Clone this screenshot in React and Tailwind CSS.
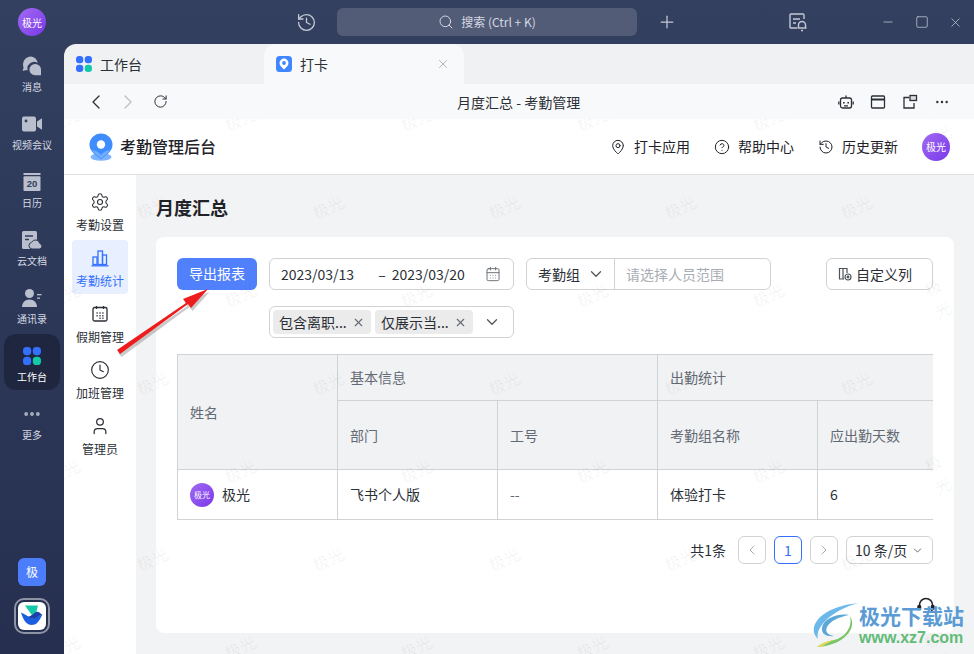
import {
  Settings, Clock, User, MapPin, CircleHelp, History, ChevronLeft, ChevronRight, ChevronDown,
  RotateCw, X, Search, Plus, Minus, Square, Ellipsis, CalendarDays,
} from 'lucide-react';

const FONT = '"Noto Sans CJK SC", "Noto Sans", sans-serif';

function GridIcon({ size = 18 }) {
  return (
    <svg width={size} height={size} viewBox="0 0 18 18">
      <rect x="0" y="0" width="8.2" height="8.2" rx="3.6" fill="#3370ff" />
      <rect x="9.8" y="0" width="8.2" height="8.2" rx="3.6" fill="#3370ff" />
      <rect x="0" y="9.8" width="8.2" height="8.2" rx="3.6" fill="#3370ff" />
      <rect x="9.8" y="9.8" width="8.2" height="8.2" rx="3.6" fill="#14c9a8" />
    </svg>
  );
}

function MessageIcon() {
  return (
    <svg width="20" height="20" viewBox="0 0 20 20" fill="#b9bfcd">
      <path d="M9 0.5a8 8 0 0 0-7.4 11l-1 3.5 3.6-1a8 8 0 0 0 1.6 0.6 6.6 6.6 0 0 1 9.9-7.6A8 8 0 0 0 9 0.5z" />
      <path d="M13 8a5.6 5.6 0 1 0 0 11.2h6v-5.6A5.6 5.6 0 0 0 13 8z" />
    </svg>
  );
}

function VideoIcon() {
  return (
    <svg width="20" height="16" viewBox="0 0 20 16" fill="#b9bfcd">
      <rect x="0" y="0.5" width="14" height="15" rx="2" />
      <path d="M15 5.5l5-3.2v11.4l-5-3.2z" />
      <circle cx="4" cy="5" r="1.4" fill="#323d5c" />
    </svg>
  );
}

function CalendarIcon() {
  return (
    <svg width="18" height="18" viewBox="0 0 18 18">
      <rect x="0.5" y="0" width="17" height="2" fill="#b9bfcd" />
      <rect x="0.5" y="3.2" width="17" height="14.8" rx="1" fill="#b9bfcd" />
      <text x="9" y="14" textAnchor="middle" fontSize="9.5" fontWeight="700" fill="#323d5c" fontFamily="Liberation Sans, sans-serif">20</text>
    </svg>
  );
}

function DocIcon() {
  return (
    <svg width="20" height="18" viewBox="0 0 20 18">
      <rect x="0" y="0" width="15" height="18" rx="1.5" fill="#b9bfcd" />
      <path d="M3 5h8M3 8.5h4" stroke="#323d5c" strokeWidth="1.5" />
      <path d="M10 18a3.4 3.4 0 0 1-.4-6.7 4.4 4.4 0 0 1 8.2 1.2A2.8 2.8 0 0 1 17.4 18z" fill="#b9bfcd" stroke="#2e3858" strokeWidth="1" />
    </svg>
  );
}

function ContactIcon() {
  return (
    <svg width="20" height="18" viewBox="0 0 20 18" fill="#b9bfcd">
      <circle cx="7.5" cy="4.5" r="4.5" />
      <path d="M0 18c0-4.6 3.2-7.6 7.5-7.6S15 13.4 15 18z" />
      <rect x="15" y="5" width="4.5" height="1.3" />
      <rect x="15" y="8.5" width="3" height="1.3" />
    </svg>
  );
}

function PinTile() {
  return (
    <svg width="16" height="16" viewBox="0 0 16 16">
      <rect width="16" height="16" rx="3.5" fill="#3f86ff" />
      <path d="M8 2.6a4.5 4.5 0 0 0-4.5 4.5c0 2.7 2.6 4.6 4.5 6.3 1.9-1.7 4.5-3.6 4.5-6.3A4.5 4.5 0 0 0 8 2.6z" fill="#fff" />
      <circle cx="8" cy="7" r="1.9" fill="#3f86ff" />
    </svg>
  );
}

function BrandPin() {
  return (
    <svg width="24" height="28" viewBox="0 0 24 28">
      <ellipse cx="12" cy="24" rx="10.5" ry="3.8" fill="#7db4ff" />
      <path d="M12 0.5A11.5 11.5 0 0 0 0.5 12c0 6.2 6.5 10.4 11.5 14.2 5-3.8 11.5-8 11.5-14.2A11.5 11.5 0 0 0 12 0.5z" fill="#3f8cff" />
      <path d="M3 17c3 0.5 7 2 9 5 2-3 6-4.5 9-5-2.2 3.6-6 6-9 8.5-3-2.5-6.8-4.9-9-8.5z" fill="#6fadff" />
      <circle cx="12" cy="11.5" r="4.2" fill="#fff" />
    </svg>
  );
}

function LarkLogo() {
  return (
    <svg width="24" height="24" viewBox="0 0 24 24">
      <path d="M5 1.5h13l-2.5 9.5-3 1z" fill="#14c9a8" />
      <path d="M1 8.5c3.5 1.5 7 4 10.5 5.5 3 1 7-2.5 11-3.5-3 5.5-5 10.5-11 10.5-4.5 0-8-4-10.5-12.5z" fill="#1a5fe0" />
      <path d="M8 13c2 0.8 4 2 6 1.5 2.5-0.7 5-2.8 8.5-4-1.5 0.2-3-4-6.5-2.500-2 1-3 3-8 5z" fill="#1f3fa8" />
    </svg>
  );
}

function BarsIcon() {
  return (
    <svg width="18" height="18" viewBox="0 0 18 18" fill="none" stroke="#3370ff" strokeWidth="1.3">
      <rect x="2" y="8" width="4" height="7.5" />
      <rect x="7" y="2" width="4.5" height="13.5" />
      <rect x="11.5" y="6" width="4" height="9.5" />
      <path d="M0.5 16.8h17" />
    </svg>
  );
}

function HolidayIcon() {
  return (
    <svg width="18" height="18" viewBox="0 0 18 18" fill="none" stroke="#2b2f36" strokeWidth="1.3">
      <rect x="2" y="2.5" width="14" height="13.5" rx="1.5" />
      <path d="M5.5 1v3M12.5 1v3" />
      <path d="M5.5 8h1.2M8.4 8h1.2M11.3 8h1.2M5.5 10.8h1.2M8.4 10.8h1.2M11.3 10.8h1.2M8.4 13.3h1.2M11.3 13.3h1.2" strokeWidth="1.5" />
    </svg>
  );
}

function RobotIcon() {
  return (
    <svg width="16" height="16" viewBox="0 0 16 16" fill="none" stroke="#2b2f36" strokeWidth="1.3">
      <rect x="2.5" y="4" width="11" height="10" rx="2" />
      <path d="M8 1.5V4M0.8 7.5v3M15.2 7.5v3" />
      <path d="M5.8 8v1.5M10.2 8v1.5" strokeWidth="1.6" />
      <path d="M6 11.8h4" />
    </svg>
  );
}

function WindowIcon() {
  return (
    <svg width="16" height="16" viewBox="0 0 16 16" fill="none" stroke="#2b2f36" strokeWidth="1.3">
      <rect x="1.5" y="2" width="13" height="12" rx="1" />
      <path d="M1.5 5.5h13" strokeWidth="2" />
    </svg>
  );
}

function PopoutIcon() {
  return (
    <svg width="16" height="16" viewBox="0 0 16 16" fill="none" stroke="#2b2f36" strokeWidth="1.3">
      <path d="M7 3.5H2V14h10V9" />
      <rect x="8" y="1.5" width="6.5" height="5" fill="#2b2f36" fillOpacity="0.15" />
    </svg>
  );
}

function ColumnsIcon() {
  return (
    <svg width="14" height="14" viewBox="0 0 14 14" fill="none" stroke="#4e5358" strokeWidth="1.2">
      <path d="M6 12H1.5V1.5H9V6M5 1.5V12" />
      <circle cx="10" cy="10" r="3" />
      <circle cx="10" cy="10" r="0.8" fill="#4e5358" />
    </svg>
  );
}

function NoticeIcon() {
  return (
    <svg width="20" height="20" viewBox="0 0 20 20" fill="none" stroke="#c3c8d4" strokeWidth="1.4">
      <path d="M9 16H3a1 1 0 0 1-1-1V3a1 1 0 0 1 1-1h12a1 1 0 0 1 1 1v4" />
      <path d="M5 7h7M5 11h3" />
      <path d="M10.5 16v-3a3.5 3.5 0 0 1 7 0v3zM9.5 16h9M13 18.5h2" />
    </svg>
  );
}

function Avatar({ size, text }) {
  return (
    <div className={`${size} flex shrink-0 items-center justify-center rounded-full bg-gradient-to-br from-[#a269f2] to-[#7a35e8] text-white`}>
      {text}
    </div>
  );
}

const RAIL = [
  { label: '消息', icon: <MessageIcon /> },
  { label: '视频会议', icon: <VideoIcon /> },
  { label: '日历', icon: <CalendarIcon /> },
  { label: '云文档', icon: <DocIcon /> },
  { label: '通讯录', icon: <ContactIcon /> },
  { label: '工作台', icon: <GridIcon />, active: true },
  { label: '更多', icon: <Ellipsis size={20} color="#a9afbf" strokeWidth={2.6} /> },
];

const SIDE = [
  { label: '考勤设置', icon: <Settings size={20} strokeWidth={1.3} color="#2b2f36" /> },
  { label: '考勤统计', icon: <BarsIcon />, active: true },
  { label: '假期管理', icon: <HolidayIcon /> },
  { label: '加班管理', icon: <Clock size={20} strokeWidth={1.4} color="#2b2f36" /> },
  { label: '管理员', icon: <User size={20} strokeWidth={1.5} color="#2b2f36" /> },
];

const LINKS = [
  { label: '打卡应用', icon: <MapPin size={16} strokeWidth={1.5} /> },
  { label: '帮助中心', icon: <CircleHelp size={16} strokeWidth={1.5} /> },
  { label: '历史更新', icon: <History size={16} strokeWidth={1.5} /> },
];

// staggered 极光 marks across the page area
const MARKS = [];
for (let row = 0; row < 7; row++) {
  for (let col = 0; col < 6; col++) {
    MARKS.push({ x: (row % 2 === 0 ? 0 : 88) + col * 176, y: row * 88 });
  }
}

function Tag({ text }) {
  return (
    <div className="flex h-6 w-[98px] items-center justify-between rounded bg-[#ebebeb] pl-[6px] pr-[6px] text-[14px] text-[#2b2f36]">
      <span>{text}</span>
      <X size={13} color="#646a73" strokeWidth={2} />
    </div>
  );
}

function PageButton({ children, active }) {
  return (
    <div className={`flex h-7 w-7 items-center justify-center rounded-md border bg-white text-[14px] ${active ? 'border-[#3370ff] text-[#3370ff]' : 'border-[#d0d3d6] text-[#a9adb3]'}`}>
      {children}
    </div>
  );
}

export default function App() {
  const th = 'border-r border-b border-[#d0d3d6] bg-[#f1f2f4] px-3 text-left text-[14px] font-normal text-[#646a73]';
  const td = 'border-r border-b border-[#d0d3d6] bg-white px-3 text-[14px] text-[#2b2f36]';

  return (
    <div className="relative flex h-[654px] w-[974px] overflow-hidden bg-gradient-to-b from-[#33405f] to-[#262f50]" style={{ fontFamily: FONT }}>
      {/* Left rail */}
      <div className="flex w-[64px] shrink-0 flex-col items-center">
        <div className="mt-2 flex h-7 items-center">
          <Avatar size="h-7 w-7 text-[10px]" text="极光" />
        </div>
        <div className="mt-2 flex flex-col items-center gap-[2px]">
          {RAIL.map(item => (
            <div
              key={item.label}
              className={`flex h-14 w-14 flex-col items-center justify-center gap-1 rounded-xl pt-[6px] ${item.active ? 'bg-[#1f2740]' : ''}`}
            >
              <div className="flex h-5 items-center justify-center">{item.icon}</div>
              <div className={`text-[10px] leading-[14px] ${item.active ? 'text-white' : 'text-[#d5d9e3]'}`}>{item.label}</div>
            </div>
          ))}
        </div>
        <div className="mt-auto mb-5 flex flex-col items-center gap-3">
          <div className="flex h-7 w-7 items-center justify-center rounded-md bg-[#4c7efb] text-[12px] text-white">极</div>
          <div className="flex h-9 w-9 items-center justify-center rounded-[10px] border-2 border-[#8e94a5]">
            <div className="flex h-7 w-7 items-center justify-center rounded-md bg-white">
              <LarkLogo />
            </div>
          </div>
        </div>
      </div>

      <div className="flex min-w-0 flex-1 flex-col">
        {/* Title bar */}
        <div className="flex h-11 shrink-0 items-center text-[#c3c8d4]">
          <History size={21} strokeWidth={1.5} className="ml-[232px]" />
          <div className="ml-[20px] flex h-7 w-[300px] items-center justify-center gap-[7px] rounded-md bg-[#525c76] text-[12px] text-[#d5d9e3]">
            <Search size={16} strokeWidth={1.5} />
            <span>搜索 (Ctrl + K)</span>
          </div>
          <Plus size={20} strokeWidth={1.5} className="ml-[20px]" />
          <div className="ml-[111px]"><NoticeIcon /></div>
          <Minus size={14} strokeWidth={1.3} className="ml-[73px]" />
          <Square size={14} strokeWidth={1.3} className="ml-[20px]" />
          <X size={15} strokeWidth={1.2} className="ml-[19px]" />
        </div>

        {/* Window */}
        <div className="relative flex min-h-0 flex-1 flex-col overflow-hidden rounded-tl-xl bg-[#f0f1f3]">
          {/* Tabs */}
          <div className="flex h-10 shrink-0">
            <div className="flex w-[200px] items-center gap-[8px] pl-3 text-[14px] text-[#2b2f36]">
              <GridIcon size={16} />
              <span>工作台</span>
            </div>
            <div className="flex w-[200px] items-center gap-[8px] rounded-t-xl bg-[#f8f9fb] pl-3 pr-[14px] text-[14px] text-[#2b2f36]">
              <PinTile />
              <span>打卡</span>
              <X size={14} strokeWidth={1.2} color="#8f959e" className="ml-auto" />
            </div>
          </div>

          {/* Browser nav */}
          <div className="flex h-[35px] shrink-0 items-center bg-[#f8f9fb] pl-[20px] pr-[24px] text-[#2b2f36]">
            <ChevronLeft size={24} strokeWidth={1.3} />
            <ChevronRight size={24} strokeWidth={1.3} color="#bbbfc4" className="ml-[8px]" />
            <RotateCw size={15} strokeWidth={1.6} className="ml-[13px]" />
            <div className="ml-[289px] text-[14px] leading-none">月度汇总 - 考勤管理</div>
            <div className="ml-auto flex items-center gap-[16px]">
              <RobotIcon />
              <WindowIcon />
              <PopoutIcon />
              <Ellipsis size={16} strokeWidth={1.6} />
            </div>
          </div>

          <div className="relative flex min-h-0 flex-1 flex-col">
            {/* App header */}
            <div className="flex h-14 shrink-0 items-center border-b border-[#dee0e3] bg-white pl-[25px] pr-6">
              <BrandPin />
              <div className="ml-[7px] pb-[2px] text-[16px] font-medium text-[#1f2329]">考勤管理后台</div>
              <div className="ml-auto flex items-center gap-[24px] text-[#1f2329]">
                {LINKS.map(link => (
                  <div key={link.label} className="flex items-center gap-2">
                    {link.icon}
                    <span className="text-[14px]">{link.label}</span>
                  </div>
                ))}
                <Avatar size="h-7 w-7 text-[10px]" text="极光" />
              </div>
            </div>

            <div className="flex min-h-0 flex-1">
              {/* Side nav */}
              <div className="flex w-[72px] shrink-0 flex-col items-center gap-[2px] bg-white pt-[9px]">
                {SIDE.map(item => (
                  <div
                    key={item.label}
                    className={`flex h-[54px] w-14 flex-col items-center justify-center gap-[5px] rounded pt-[2px] ${item.active ? 'bg-[#e8effe] text-[#3370ff]' : 'text-[#2b2f36]'}`}
                  >
                    <div className="flex h-5 items-center">{item.icon}</div>
                    <div className="text-[12px] leading-[16px]">{item.label}</div>
                  </div>
                ))}
              </div>

              {/* Main */}
              <div className="min-w-0 flex-1 bg-[#f2f3f5] px-5 pt-[19px]">
                <div className="text-[18px] font-bold leading-[26px] text-[#1f2329]">月度汇总</div>
                <div className="relative mt-[17px] h-[396px] rounded-lg bg-white px-[21px] pt-[21px]">
                  {/* Filters */}
                  <div className="flex items-start">
                    <div className="flex h-8 w-20 items-center justify-center rounded-md bg-[#5080fb] pb-[2px] text-[14px] text-white">导出报表</div>
                    <div className="ml-3 flex flex-col gap-4">
                      <div className="flex h-8 w-[245px] items-center rounded-md border border-[#d0d3d6] pl-[11px] pr-[12px] text-[14px] text-[#2b2f36]">
                        <span>2023/03/13</span>
                        <span className="ml-[24px]">–</span>
                        <span className="ml-[6px]">2023/03/20</span>
                        <CalendarDays size={16} strokeWidth={1.4} color="#646a73" className="ml-auto" />
                      </div>
                      <div className="flex h-8 w-[245px] items-center gap-[4px] rounded-md border border-[#d0d3d6] pl-[3px] pr-[12px]">
                        <Tag text="包含离职..." />
                        <Tag text="仅展示当..." />
                        <ChevronDown size={18} strokeWidth={1.6} color="#4e5358" className="ml-auto" />
                      </div>
                    </div>
                    <div className="ml-3 flex h-8 w-[245px] items-center rounded-md border border-[#d0d3d6] text-[14px]">
                      <div className="flex h-full w-[88px] items-center gap-[7px] border-r border-[#d0d3d6] pl-[11px] text-[#2b2f36]">
                        <span>考勤组</span>
                        <ChevronDown size={18} strokeWidth={1.6} color="#4e5358" />
                      </div>
                      <span className="pl-[11px] text-[#a9adb3]">请选择人员范围</span>
                    </div>
                    <div className="ml-auto flex h-8 w-[107px] items-center gap-[4px] rounded-md border border-[#d0d3d6] pl-[11px] text-[14px] text-[#2b2f36]">
                      <ColumnsIcon />
                      <span>自定义列</span>
                    </div>
                  </div>

                  {/* Table */}
                  <div className="mt-4 w-[756px] overflow-hidden border-l border-t border-[#d0d3d6]">
                    <table className="w-[960px] table-fixed border-separate border-spacing-0">
                      <thead>
                        <tr className="h-[46px]">
                          <th rowSpan={2} className={`${th} w-[160px]`}>姓名</th>
                          <th colSpan={2} className={th}>基本信息</th>
                          <th colSpan={3} className={th}>出勤统计</th>
                        </tr>
                        <tr className="h-[69px]">
                          <th className={th}>部门</th>
                          <th className={th}>工号</th>
                          <th className={th}>考勤组名称</th>
                          <th className={th}>应出勤天数</th>
                          <th className={th}></th>
                        </tr>
                      </thead>
                      <tbody>
                        <tr className="h-[50px]">
                          <td className={td}>
                            <div className="flex items-center gap-2">
                              <Avatar size="h-6 w-6 text-[8px]" text="极光" />
                              <span>极光</span>
                            </div>
                          </td>
                          <td className={td}>飞书个人版</td>
                          <td className={`${td} text-[#646a73]`}>--</td>
                          <td className={td}>体验打卡</td>
                          <td className={td}>6</td>
                          <td className={td}></td>
                        </tr>
                      </tbody>
                    </table>
                  </div>

                  {/* Pagination */}
                  <div className="mt-4 flex items-center justify-end gap-2 text-[14px] text-[#2b2f36]">
                    <span className="mr-1">共1条</span>
                    <PageButton><ChevronLeft size={16} strokeWidth={1.5} /></PageButton>
                    <PageButton active>1</PageButton>
                    <PageButton><ChevronRight size={16} strokeWidth={1.5} /></PageButton>
                    <div className="flex h-7 w-[87px] items-center justify-between rounded-md border border-[#d0d3d6] pl-2 pr-2">
                      <span>10 条/页</span>
                      <ChevronDown size={13} strokeWidth={1.8} color="#646a73" />
                    </div>
                  </div>

                  {/* Support button */}
                  <div className="absolute bottom-[6px] right-[7px] flex h-[42px] w-[42px] items-center justify-center rounded-full bg-white">
                    <svg width="20" height="20" viewBox="0 0 20 20" fill="none" stroke="#1f2329" strokeWidth="1.5">
                      <path d="M3.5 11V9a6.5 6.5 0 0 1 13 0v2" />
                      <rect x="2" y="9.5" width="2.5" height="4" rx="1" fill="#1f2329" />
                      <rect x="15.5" y="9.5" width="2.5" height="4" rx="1" fill="#1f2329" />
                      <path d="M16 13.5c0 2-2 3-4.5 3" />
                    </svg>
                  </div>
                </div>
              </div>
            </div>

            {/* Watermark layer */}
            <div className="pointer-events-none absolute inset-0 overflow-hidden">
              {MARKS.map(m => (
                <span
                  key={`${m.x}-${m.y}`}
                  className="absolute -translate-x-1/2 -translate-y-1/2 -rotate-[25deg] text-[16px] text-black/[0.06]"
                  style={{ left: m.x, top: m.y }}
                >
                  极光
                </span>
              ))}
            </div>
          </div>
        </div>
      </div>

      {/* Red pointer arrow */}
      <svg className="pointer-events-none absolute left-[110px] top-[280px]" width="110" height="80" viewBox="0 0 110 80">
        <path d="M7 70L76 23l-3-4 25-10-17 19-3-4L10 74z" fill="#8a8a8a" fillOpacity="0.45" transform="translate(1.5 3)" />
        <path d="M7 70L76 23l-3-4 25-10-17 19-3-4L10 74z" fill="#ee1c1c" />
      </svg>

      {/* Site stamp */}
      <div className="pointer-events-none absolute bottom-0 right-[10px] flex h-[58px] items-center">
        <svg width="46" height="44" viewBox="0 0 46 44">
          <path d="M45 0C28 2 6 8 1 24c-1 5 1 9 4 12C2 24 18 8 45 0z" fill="#6db8ea" />
          <path d="M36 12C24 10 10 16 9 25c-1 6 5 9 12 8-7-1-9-5-7-9 3-6 12-10 22-12z" fill="#5aa7d8" />
          <path d="M37 13c3 12-6 22-16 24-6 1-12 3-17 7 14-1 28-6 34-18 2-5 1-10-1-13z" fill="#78c565" />
          <path d="M4 44c6-5 12-6 18-7-6 2-10 4-14 7z" fill="#e6d85c" />
        </svg>
        <div className="flex flex-col items-start">
          <span className="text-[21px] font-bold leading-[26px] text-[#5b9bd5]">极光下载站</span>
          <span className="text-[16px] font-bold leading-[20px] text-[#62bb78]" style={{ fontFamily: '"Liberation Sans", sans-serif' }}>www.xz7.com</span>
        </div>
      </div>
    </div>
  );
}
